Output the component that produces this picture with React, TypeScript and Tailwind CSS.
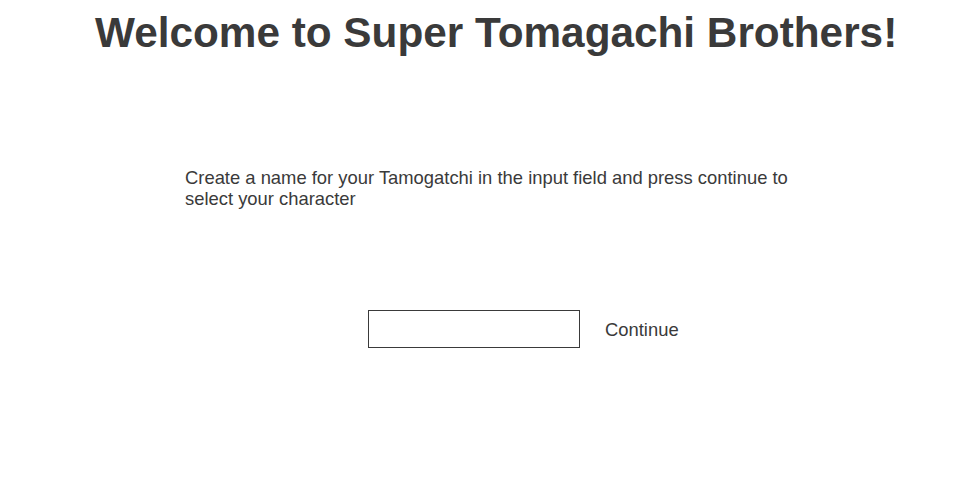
export default function App() {
  return (
    <div className="w-[975px] h-[504px] bg-white text-[#3a3a3a] font-['Liberation_Sans',Arial,sans-serif]">
      <h1 className="pt-[9px] pl-[95px] text-[42.3px] leading-[48px] font-bold whitespace-nowrap">
        Welcome to Super Tomagachi Brothers!
      </h1>
      <p className="mt-[110px] ml-[185px] w-[615px] text-[18.4px] leading-[21px]">
        Create a name for your Tamogatchi in the input field and press continue to select your character
      </p>
      <div className="mt-[101px] ml-[368px] flex items-center">
        <input
          type="text"
          className="w-[212px] h-[38px] border border-[#3a3a3a] bg-white px-2 outline-none"
        />
        <button className="ml-[25px] text-[18.4px] leading-[21px] text-[#3a3a3a]">Continue</button>
      </div>
    </div>
  );
}
